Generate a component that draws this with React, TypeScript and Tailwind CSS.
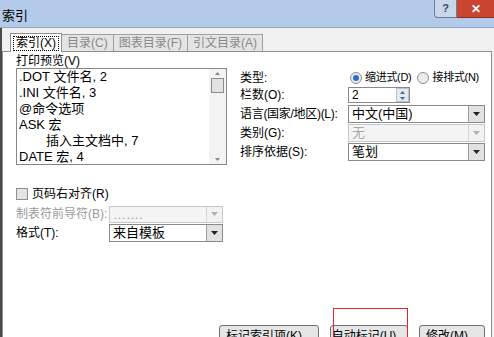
const font = "font-[Liberation_Sans,Noto_Sans_CJK_SC,sans-serif]";

function DropArrow({ disabled }: { disabled?: boolean }) {
  return (
    <div className={`flex h-full w-[16px] items-center justify-center border-l ${disabled ? "border-[#d6d6d6] bg-[#f2f2f2]" : "border-[#a0a0a0] bg-[#e2e2e2]"}`}>
      <svg width="7" height="4" viewBox="0 0 7 4">
        <path d="M0 0h7L3.5 4z" fill={disabled ? "#b0b0b0" : "#222"} />
      </svg>
    </div>
  );
}

function Combo({ value, width, disabled, h = "h-[18px]" }: { value: string; width: string; disabled?: boolean; h?: string }) {
  return (
    <div className={`flex ${h} ${width} items-stretch border ${disabled ? "border-[#c8c8c8] bg-[#f4f4f4] text-[#a8a8a8]" : "border-[#8a8a8a] bg-white text-black"}`}>
      <div className="flex flex-1 items-center px-[3px] text-[13px] leading-none">{value}</div>
      <DropArrow disabled={disabled} />
    </div>
  );
}

function Radio({ checked, label }: { checked?: boolean; label: string }) {
  return (
    <div className="flex items-center gap-[3px] whitespace-nowrap">
      <div className="flex h-[12px] w-[12px] items-center justify-center rounded-full border border-[#8e8f8f] bg-[#ececec]">
        {checked && <div className="h-[6px] w-[6px] rounded-full bg-[#2a70c0]" />}
      </div>
      <span className="text-[11px] tracking-[-0.3px]">{label}</span>
    </div>
  );
}

function Btn({ label, width, children }: { label: string; width: string; children?: React.ReactNode }) {
  return (
    <div className={`relative flex h-[22px] ${width} shrink-0 items-start justify-center whitespace-nowrap rounded-[3px] border border-[#707070] bg-[#e6e6e6] pt-[1px] text-[12px]`}>
      {label}
      {children}
    </div>
  );
}

export default function App() {
  const items = [
    { t: ".DOT 文件名, 2", indent: false },
    { t: ".INI 文件名, 3", indent: false },
    { t: "@命令选项", indent: false },
    { t: "ASK 宏", indent: false },
    { t: "插入主文档中, 7", indent: true },
    { t: "DATE 宏, 4", indent: false },
  ];

  return (
    <div className={`flex h-[337px] w-[494px] flex-col overflow-hidden bg-[#f0f0f0] text-[12px] text-black ${font}`}>
      {/* title bar */}
      <div className="flex h-[28px] shrink-0 items-start justify-between border-b border-[#8fa8c4] bg-[#b3cbe8]">
        <span className="pl-[2px] pt-[6px] text-[13px]">索引</span>
        <div className="flex h-[18px]">
          <div className="flex w-[23px] items-center justify-center rounded-bl-[4px] border border-t-0 border-[#6a7f98] bg-[#c8d8ea] text-[11px] font-bold text-[#3a4a60]">?</div>
          <div className="flex w-[37px] items-center justify-center border-b border-[#8a2a20] bg-[#c9452f] text-[12px] font-bold text-white">✕</div>
        </div>
      </div>

      <div className="flex flex-1 flex-col border-l-2 border-[#4a4a4a]">
        {/* tabs */}
        <div className="flex h-[23px] items-end pl-[8px]">
          <div className="relative z-10 mb-[-1px] flex h-[19px] items-center border border-b-0 border-[#8e8f8f] bg-white px-[2px]">
            <span className="border border-dotted border-black px-[2px] leading-[13px]">索引(X)</span>
          </div>
          {["目录(C)", "图表目录(F)", "引文目录(A)"].map((t) => (
            <div key={t} className="flex h-[17px] items-center border border-b-0 border-l-0 border-[#a0a0a0] bg-[#e4e4e4] px-[5px] text-[#888]">
              {t}
            </div>
          ))}
        </div>

        {/* panel */}
        <div className="mr-[2px] flex flex-1 flex-col border border-[#8e8f8f] bg-white pl-[13px]">
          <div className="mt-[2px] leading-[14px]">打印预览(V)</div>
          <div className="flex">
            {/* preview list */}
            <div className="flex h-[97px] w-[211px] shrink-0 border border-[#828790]">
              <div className="flex flex-1 flex-col pl-[2px] text-[13px] leading-[16px]">
                {items.map((i) => (
                  <div key={i.t} className={i.indent ? "pl-[27px]" : ""}>{i.t}</div>
                ))}
              </div>
              <div className="flex w-[17px] flex-col items-center justify-between bg-[#f4f4f4] py-[3px]">
                <div className="flex flex-col items-center gap-[3px]">
                  <svg width="5" height="3" viewBox="0 0 5 3"><path d="M0 3h5L2.5 0z" fill="#888" /></svg>
                  <div className="h-[15px] w-[13px] border border-[#8a8a8a] bg-[#e2e2e2]" />
                </div>
                <svg width="5" height="3" viewBox="0 0 5 3"><path d="M0 0h5L2.5 3z" fill="#888" /></svg>
              </div>
            </div>

            {/* options */}
            <div className="ml-[13px] grid grid-cols-[108px_137px] grid-rows-[17px_18px_19px_19px_19px] items-center pt-[1px]">
              <div>类型:</div>
              <div className="flex gap-[6px] pl-[2px]">
                <Radio checked label="缩进式(D)" />
                <Radio label="接排式(N)" />
              </div>
              <div>栏数(O):</div>
              <div className="flex h-[16px] w-[62px] border border-[#8a8a8a] bg-white">
                <div className="flex flex-1 items-center pl-[3px] leading-none">2</div>
                <div className="flex w-[13px] flex-col border border-[#b8c4d0] bg-[#e2eaf2]">
                  <div className="flex flex-1 items-center justify-center"><svg width="5" height="3" viewBox="0 0 5 3"><path d="M0 3h5L2.5 0z" fill="#4a6a8a" /></svg></div>
                  <div className="flex flex-1 items-center justify-center"><svg width="5" height="3" viewBox="0 0 5 3"><path d="M0 0h5L2.5 3z" fill="#4a6a8a" /></svg></div>
                </div>
              </div>
              <div className="whitespace-nowrap tracking-[-0.3px]">语言(国家/地区)(L):</div>
              <Combo value="中文(中国)" width="w-[137px]" />
              <div>类别(G):</div>
              <Combo value="无" width="w-[137px]" disabled />
              <div>排序依据(S):</div>
              <Combo value="笔划" width="w-[137px]" />
            </div>
          </div>

          {/* bottom left */}
          <div className="mt-[20px] flex items-center gap-[4px]">
            <div className="h-[12px] w-[12px] border border-[#8e8f8f] bg-[#e4e4e4]" />
            <span>页码右对齐(R)</span>
          </div>
          <div className="mt-[2px] grid grid-cols-[93px_auto] grid-rows-[18px_19px] items-center">
            <div className="text-[#9a9a9a]">制表符前导符(B):</div>
            <Combo value="……." width="w-[114px]" disabled h="h-[17px]" />
            <div>格式(T):</div>
            <Combo value="来自模板" width="w-[114px]" />
          </div>

          {/* buttons */}
          <div className="mt-[83px] flex justify-end gap-[11px] pr-[6px]">
            <Btn label="标记索引项(K)..." width="w-[100px]" />
            <Btn label="自动标记(U)..." width="w-[78px]">
              <div className="absolute left-[2px] right-[-1px] top-[-18px] h-[40px] border border-[#e02828]" />
            </Btn>
            <Btn label="修改(M)..." width="w-[66px]" />
          </div>
        </div>
      </div>
    </div>
  );
}
